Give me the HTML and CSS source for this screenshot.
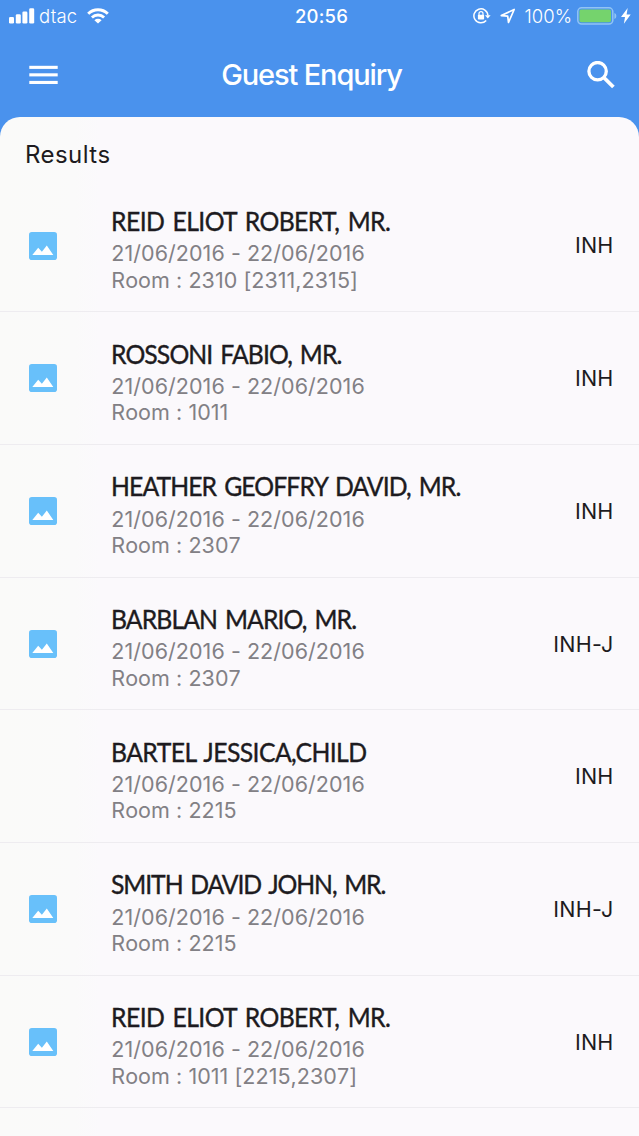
FILE: index.html
```html
<!DOCTYPE html>
<html lang="en">
<head>
<meta charset="utf-8">
<title>Guest Enquiry</title>
<link rel="stylesheet" href="styles.css">
</head>
<body>
<svg width="0" height="0" class="defs">
  <symbol id="photo" viewBox="0 0 28 28">
    <rect width="28" height="28" rx="2.8" fill="#68c0fa"/>
    <path d="M3.3 23 L9.2 15.8 L12.9 19.8 L17.8 13.6 L24.3 23Z" fill="#fff"/>
  </symbol>
</svg>
<header class="top">
  <div class="status">
    <div class="carrier">
      <svg class="signal" width="26" height="16" viewBox="0 0 26 16" fill="#fff"><rect x="0" y="9" width="5" height="6.6" rx="1.3"/><rect x="6.8" y="6.3" width="5" height="9.3" rx="1.3"/><rect x="13.4" y="3.4" width="5" height="12.2" rx="1.3"/><rect x="20.2" y="0.2" width="5" height="15.4" rx="1.3"/></svg>
      <span class="network">dtac</span>
      <svg class="wifi" width="22" height="16" viewBox="0 0 22 16" fill="none" stroke="#fff" stroke-width="3"><path d="M1.2 5.7 A14 14 0 0 1 20.8 5.7"/><path d="M4.9 9.5 A8.7 8.7 0 0 1 17.1 9.5" stroke-width="2.8"/><path d="M11 15.6 L7.4 12.2 A5.1 5.1 0 0 1 14.6 12.2Z" fill="#fff" stroke="none"/></svg>
    </div>
    <span class="clock">20:56</span>
    <div class="power">
      <svg width="18" height="16" viewBox="0 0 18 16" fill="none" stroke="#fff" stroke-width="1.5"><path d="M13.2 12.4 A7 7 0 1 1 14.9 7.5"/><path d="M12 7.2 H17.6 L14.8 10.5Z" fill="#fff" stroke="none"/><path d="M6 7 V5.6 A2 2 0 0 1 10 5.6 V7" stroke-width="1.2"/><rect x="4.9" y="6.7" width="6.2" height="4.8" rx=".7" fill="#fff" stroke="none"/></svg>
      <svg class="arrow" width="16" height="16" viewBox="0 0 16 16" fill="none" stroke="#fff" stroke-width="1.7" stroke-linejoin="round"><path d="M1.3 7.6 L14.2 1.5 L8.5 14.4 L7.7 8.1Z"/></svg>
      <span class="percent">100%</span>
      <svg class="battery" width="40" height="18" viewBox="0 0 40 18"><rect x=".8" y=".8" width="35" height="16.2" rx="3.8" fill="none" stroke="#91c4f4" stroke-width="1.5"/><rect x="2.4" y="2.6" width="31.6" height="12.6" rx="2" fill="#75d36d"/><path d="M37.4 6 Q39.4 6.5 39.4 9 T37.4 12Z" fill="#91c4f4"/></svg>
      <svg class="bolt" width="10" height="16" viewBox="0 0 10 16" fill="#fff"><path d="M6.7 0 L0 8.9 H4 L2.9 15.8 L9.7 6.5 H5.6Z"/></svg>
    </div>
  </div>
  <nav class="bar">
    <svg width="29" height="20" viewBox="0 0 29 20" fill="#fff"><rect x=".3" y=".8" width="28.4" height="3.1"/><rect x=".3" y="8.3" width="28.4" height="3.1"/><rect x=".3" y="15.9" width="28.4" height="3.1"/></svg>
    <h1 class="title">Guest Enquiry</h1>
    <svg width="28" height="28" viewBox="0 0 28 28" fill="none" stroke="#fff"><circle cx="10.6" cy="10.2" r="8.7" stroke-width="3.3"/><path d="M16.8 16.5 L26.4 26" stroke-width="3.8"/></svg>
  </nav>
</header>
<main class="sheet">
  <h2 class="heading">Results</h2>
  <ul class="list">
    <li class="row"><svg class="photo"><use href="#photo"/></svg><div class="info"><p class="name loose">REID ELIOT ROBERT, MR.</p><p class="line">21/06/2016 - 22/06/2016</p><p class="line">Room : 2310 [2311,2315]</p></div><span class="state">INH</span></li>
    <li class="row"><svg class="photo"><use href="#photo"/></svg><div class="info"><p class="name">ROSSONI FABIO, MR.</p><p class="line">21/06/2016 - 22/06/2016</p><p class="line">Room : 1011</p></div><span class="state">INH</span></li>
    <li class="row"><svg class="photo"><use href="#photo"/></svg><div class="info"><p class="name">HEATHER GEOFFRY DAVID, MR.</p><p class="line">21/06/2016 - 22/06/2016</p><p class="line">Room : 2307</p></div><span class="state">INH</span></li>
    <li class="row"><svg class="photo"><use href="#photo"/></svg><div class="info"><p class="name">BARBLAN MARIO, MR.</p><p class="line">21/06/2016 - 22/06/2016</p><p class="line">Room : 2307</p></div><span class="state">INH-J</span></li>
    <li class="row"><div class="info"><p class="name loose">BARTEL JESSICA,CHILD</p><p class="line">21/06/2016 - 22/06/2016</p><p class="line">Room : 2215</p></div><span class="state">INH</span></li>
    <li class="row"><svg class="photo"><use href="#photo"/></svg><div class="info"><p class="name tight">SMITH DAVID JOHN, MR.</p><p class="line">21/06/2016 - 22/06/2016</p><p class="line">Room : 2215</p></div><span class="state">INH-J</span></li>
    <li class="row"><svg class="photo"><use href="#photo"/></svg><div class="info"><p class="name loose">REID ELIOT ROBERT, MR.</p><p class="line">21/06/2016 - 22/06/2016</p><p class="line">Room : 1011 [2215,2307]</p></div><span class="state">INH</span></li>
  </ul>
</main>
</body>
</html>
```
FILE: styles.css
```css
* { box-sizing: border-box; margin: 0; padding: 0; }
body {
  height: 1136px;
  overflow: hidden;
  display: flex;
  flex-direction: column;
  background: #4a92ed;
  font-family: Inter, "Liberation Sans", sans-serif;
  color: #1d1b20;
}
.defs { display: none; }
svg { display: block; flex: none; }
.top { height: 117px; color: #fff; }
.status {
  height: 32px;
  padding: 0 8px 0 9px;
  display: grid;
  grid-template-columns: 1fr auto 1fr;
  align-items: center;
  font-size: 18.5px;
  font-weight: 300;
}
.carrier, .power { display: flex; align-items: center; }
.power { justify-content: flex-end; }
.network { margin-left: 4px; letter-spacing: .2px; }
.wifi { margin-left: 9.5px; }
.clock { padding-left: 3px; font-weight: 500; letter-spacing: .2px; }
.arrow { margin-left: 9px; }
.percent { margin-left: 9px; }
.battery { margin-left: 5px; }
.bolt { margin-left: 4px; }
.bar {
  height: 85px;
  padding: 0 24px 0 29px;
  display: grid;
  grid-template-columns: 29px 1fr 28px;
  align-items: center;
}
.title {
  padding-right: 22px;
  text-align: center;
  font-size: 29px;
  font-weight: 500;
  letter-spacing: -1.15px;
}
.sheet {
  flex: 1;
  min-height: 0;
  padding-top: 21px;
  border-radius: 20px 20px 0 0;
  background: linear-gradient(90deg, #fafaf9 0, #fafafa 75px, #fbf9fc 100px);
}
.heading {
  height: 41.6px;
  padding-left: 25px;
  font-size: 24px;
  line-height: 34px;
  font-weight: 400;
  letter-spacing: .45px;
}
.list { list-style: none; }
.row {
  height: 132.7px;
  padding-right: 25.5px;
  border-bottom: 1.5px solid #eeecf0;
  display: grid;
  grid-template-columns: 111px 1fr auto;
}
.photo { grid-column: 1; width: 28px; height: 28px; margin: 52px 0 0 29.3px; }
.info { grid-column: 2; padding-top: 24.4px; white-space: nowrap; }
.name {
  margin-bottom: 3.2px;
  font: 400 27.5px/33px Lato, sans-serif;
  letter-spacing: -1px;
  word-spacing: 2.8px;
  -webkit-text-stroke: .4px #1d1b20;
  transform: scaleX(.9);
  transform-origin: left;
}
.loose { letter-spacing: -.65px; }
.tight { letter-spacing: -1.2px; }
.line {
  padding-left: .3px;
  font-size: 21.5px;
  line-height: 26.4px;
  font-weight: 400;
  font-kerning: none;
  letter-spacing: .05px;
  color: #828085;
}
.state { grid-column: 3; align-self: center; font-size: 21.5px; font-weight: 400; letter-spacing: .2px; }
```
